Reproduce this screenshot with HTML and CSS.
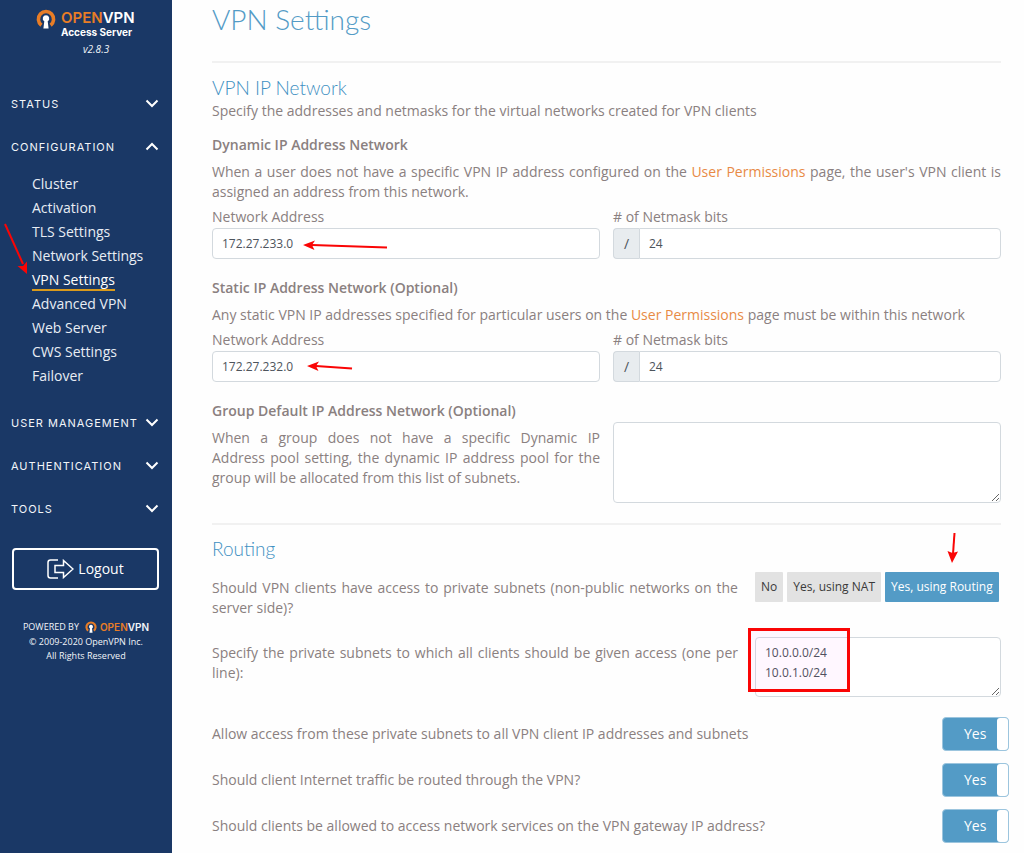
FILE: index.html
```html
<!DOCTYPE html>
<html lang="en">
<head>
    <meta charset="UTF-8">
    <meta name="viewport" content="width=device-width, initial-scale=1.0">
    <title>VPN Settings - OpenVPN Access Server</title>
    <link rel="stylesheet" href="styles.css">
</head>
<body>
    <svg class="defs" aria-hidden="true">
        <symbol id="ovpn" viewBox="0 0 20 20">
            <path d="M5.4 16.2A7.6 7.6 0 1 1 14.6 16.2" fill="none" stroke="#e87d26" stroke-width="3.6"/>
            <path d="M10 6.2a3.3 3.3 0 0 1 1.7 6.1L12.6 19.5H7.4L8.3 12.3A3.3 3.3 0 0 1 10 6.2z" fill="#fff"/>
        </symbol>
        <symbol id="chevron" viewBox="0 0 14 9">
            <path d="M1.5 1.5L7 7L12.5 1.5" fill="none" stroke="#fff" stroke-width="2"/>
        </symbol>
    </svg>

    <div class="layout">
        <aside class="sidebar">
            <div class="brand">
                <svg class="brand-icon"><use href="#ovpn"/></svg>
                <div>
                    <div class="brand-name"><span>OPEN</span>VPN</div>
                    <div class="brand-sub">Access Server</div>
                </div>
            </div>
            <div class="version">v2.8.3</div>

            <nav class="menu">
                <button class="menu-head">STATUS <svg><use href="#chevron"/></svg></button>
                <button class="menu-head open">CONFIGURATION <svg><use href="#chevron"/></svg></button>
                <ul class="submenu">
                    <li><a href="#">Cluster</a></li>
                    <li><a href="#">Activation</a></li>
                    <li><a href="#">TLS Settings</a></li>
                    <li><a href="#">Network Settings</a></li>
                    <li class="current">
                        <a href="#">VPN Settings</a>
                        <svg class="arrow arrow-menu" viewBox="0 0 26 54"><path d="M3 2L21 42" /><path class="tip" d="M25 52L15.500 44L21 44L25 39.500z"/></svg>
                    </li>
                    <li><a href="#">Advanced VPN</a></li>
                    <li><a href="#">Web Server</a></li>
                    <li><a href="#">CWS Settings</a></li>
                    <li><a href="#">Failover</a></li>
                </ul>
                <button class="menu-head">USER MANAGEMENT <svg><use href="#chevron"/></svg></button>
                <button class="menu-head">AUTHENTICATION <svg><use href="#chevron"/></svg></button>
                <button class="menu-head">TOOLS <svg><use href="#chevron"/></svg></button>
            </nav>

            <button class="logout">
                <svg viewBox="0 0 27 20"><path d="M11 1H3.500Q1 1 1 3.500V16.500Q1 19 3.500 19H11M8 6.500H16.500V1.500L26 10L16.500 18.500V13.500H8z"/></svg>
                Logout
            </button>

            <div class="powered">
                <div class="powered-row">POWERED BY <svg><use href="#ovpn"/></svg> <b><span>OPEN</span>VPN</b></div>
                <div>© 2009-2020 OpenVPN Inc.</div>
                <div>All Rights Reserved</div>
            </div>
        </aside>

        <main class="content">
            <h1>VPN Settings</h1>

            <section>
                <h2>VPN IP Network</h2>
                <p>Specify the addresses and netmasks for the virtual networks created for VPN clients</p>

                <h3>Dynamic IP Address Network</h3>
                <p>When a user does not have a specific VPN IP address configured on the <a href="#">User Permissions</a> page, the user's VPN client is assigned an address from this network.</p>
                <div class="fields">
                    <div class="field">
                        <label for="dynAddr">Network Address</label>
                        <input type="text" id="dynAddr" value="172.27.233.0">
                        <svg class="arrow arrow-dyn" viewBox="0 0 86 12"><path d="M85 7.500L10 5"/><path class="tip" d="M1 5L13 .5L10 5L12.500 10z"/></svg>
                    </div>
                    <div class="field">
                        <label for="dynBits"># of Netmask bits</label>
                        <div class="group"><span>/</span><input type="text" id="dynBits" value="24"></div>
                    </div>
                </div>

                <h3>Static IP Address Network (Optional)</h3>
                <p>Any static VPN IP addresses specified for particular users on the <a href="#">User Permissions</a> page must be within this network</p>
                <div class="fields">
                    <div class="field">
                        <label for="statAddr">Network Address</label>
                        <input type="text" id="statAddr" value="172.27.232.0">
                        <svg class="arrow arrow-stat" viewBox="0 0 48 12"><path d="M46 7.500L10 5"/><path class="tip" d="M1 5L13 .5L10 5L12.500 10z"/></svg>
                    </div>
                    <div class="field">
                        <label for="statBits"># of Netmask bits</label>
                        <div class="group"><span>/</span><input type="text" id="statBits" value="24"></div>
                    </div>
                </div>

                <h3>Group Default IP Address Network (Optional)</h3>
                <div class="fields group-default">
                    <label for="groupNets">When a group does not have a specific Dynamic IP Address&nbsp;pool setting, the dynamic IP address pool for the group will be allocated from this list of subnets.</label>
                    <textarea id="groupNets"></textarea>
                </div>
            </section>

            <section>
                <h2>Routing</h2>
                <div class="row">
                    <p>Should VPN clients have access to private subnets (non-public networks on the server side)?</p>
                    <div class="choices">
                        <button>No</button>
                        <button>Yes, using NAT</button>
                        <button class="active">Yes, using Routing</button>
                        <svg class="arrow arrow-routing" viewBox="0 0 12 32"><path d="M7.500 1L6 22"/><path class="tip" d="M5 31L.5 19L5.500 21L11 19.500z"/></svg>
                    </div>
                </div>
                <div class="row">
                    <label for="subnets">Specify the private subnets to which all clients should be given access (one per line):</label>
                    <div class="subnets">
                        <textarea id="subnets">10.0.0.0/24
10.0.1.0/24</textarea>
                        <div class="highlight"></div>
                    </div>
                </div>
                <div class="toggles">
                    <label class="toggle-row">
                        Allow access from these private subnets to all VPN client IP addresses and subnets
                        <span class="toggle"><input type="checkbox" checked><span>Yes</span></span>
                    </label>
                    <label class="toggle-row">
                        Should client Internet traffic be routed through the VPN?
                        <span class="toggle"><input type="checkbox" checked><span>Yes</span></span>
                    </label>
                    <label class="toggle-row">
                        Should clients be allowed to access network services on the VPN gateway IP address?
                        <span class="toggle"><input type="checkbox" checked><span>Yes</span></span>
                    </label>
                </div>
            </section>
        </main>
    </div>
</body>
</html>
```
FILE: styles.css
```css
* {
    box-sizing: border-box;
}
body {
    margin: 0;
    font-family: "Open Sans", sans-serif;
    font-size: 14px;
    line-height: 20px;
    color: #8a8080;
    background-color: #fefefe;
}
h1, h2, h3, p, ul {
    margin: 0;
    padding: 0;
}
button, input, textarea {
    font: inherit;
    margin: 0;
}
button {
    cursor: pointer;
}
.defs {
    position: absolute;
    width: 0;
    height: 0;
}
.layout {
    display: flex;
    min-height: 100vh;
}

/* Sidebar */
.sidebar {
    flex: 0 0 172px;
    min-width: 0;
    background-color: #1a3866;
    color: #f2f5f9;
}
.brand {
    display: flex;
    gap: 5px;
    padding: 9px 0 0 36px;
    color: white;
    font-family: Inter, sans-serif;
}
.brand-icon {
    width: 20px;
    height: 20px;
}
.brand-name {
    font-size: 15px;
    line-height: 17px;
    font-weight: 600;
}
.brand-name span, .powered b span {
    color: #e87d26;
}
.brand-sub {
    font-size: 10px;
    line-height: 12px;
    font-weight: 700;
}
.version {
    margin: 3px 0 25px 83px;
    font-size: 10px;
    line-height: 16px;
    font-style: italic;
}
.menu-head {
    display: flex;
    justify-content: space-between;
    align-items: center;
    width: 100%;
    height: 43px;
    padding: 0 13px 0 11px;
    border: none;
    background: none;
    color: #f2f5f9;
    font-family: Inter, sans-serif;
    font-size: 11px;
    font-weight: 400;
    letter-spacing: 1px;
    white-space: nowrap;
}
.menu-head svg {
    width: 14px;
    height: 9px;
}
.menu-head.open svg {
    transform: rotate(180deg);
}
.submenu {
    list-style: none;
    padding: 4px 0 13px 32px;
    line-height: 24px;
}
.submenu a {
    color: #e8edf4;
    text-decoration: none;
}
.submenu .current {
    position: relative;
}
.submenu .current a {
    color: white;
    border-bottom: 2px solid #d99a1c;
}
.logout {
    display: flex;
    justify-content: center;
    align-items: center;
    gap: 4px;
    width: 147px;
    height: 42px;
    margin: 18px 12px 29px;
    border: 2px solid white;
    border-radius: 4px;
    background: none;
    color: white;
}
.logout svg {
    width: 27px;
    height: 20px;
    fill: none;
    stroke: white;
    stroke-width: 1.5;
}
.powered {
    font-size: 9px;
    line-height: 14px;
    text-align: center;
}
.powered-row {
    display: flex;
    justify-content: center;
    align-items: center;
    gap: 3px;
    line-height: 16px;
}
.powered-row svg {
    width: 12px;
    height: 12px;
    margin-left: 3px;
}
.powered b {
    font-family: Inter, sans-serif;
    font-size: 10px;
    font-weight: 600;
}

/* Content */
.content {
    flex: 1;
    min-width: 0;
    padding: 0 23px 10px 40px;
}
.content h1 {
    height: 38px;
    margin-bottom: 23px;
    font-family: Lato, sans-serif;
    font-size: 28px;
    line-height: 38px;
    font-weight: 300;
    color: #539bc6;
}
.content h2 {
    font-family: Lato, sans-serif;
    font-size: 19px;
    line-height: 26px;
    font-weight: 300;
    color: #3f90c2;
}
.content h3 {
    margin: 19px 0 7px;
    font-size: 14px;
    line-height: 20px;
    font-weight: 600;
    color: #8a8080;
}
.content h2 + p + h3 {
    margin-top: 14px;
}
.content p, .group-default label, .row label {
    text-align: justify;
}
.content a {
    color: #e88a45;
    text-decoration: none;
}
section {
    border-top: 2px solid #f1f1f1;
    padding-top: 12px;
}
section + section {
    margin-top: 20px;
    padding-top: 11px;
}
.fields {
    display: grid;
    grid-template-columns: 1fr 1fr;
    gap: 13px;
    margin-top: 5px;
}
.field {
    position: relative;
}
.field label {
    display: block;
    margin-bottom: 1px;
}
input[type="text"], textarea {
    display: block;
    width: 100%;
    border: 1px solid #d3d9de;
    border-radius: 4px;
    background-color: white;
    color: #4d545c;
    font-size: 12px;
}
input[type="text"] {
    height: 31px;
    padding: 0 9px;
}
textarea {
    height: 60px;
    padding: 5px 9px;
    line-height: 20px;
    resize: both;
}
.group {
    display: flex;
}
.group span {
    flex: 0 0 26px;
    line-height: 29px;
    text-align: center;
    border: 1px solid #d3d9de;
    border-right: none;
    border-radius: 4px 0 0 4px;
    background-color: #e8ecef;
    color: #4d545c;
}
.group input[type="text"] {
    border-radius: 0 4px 4px 0;
}
.group-default {
    margin-top: -6px;
}
.group-default label {
    padding-top: 6px;
}
.group-default textarea {
    height: 81px;
}
.row {
    display: grid;
    grid-template-columns: 1fr 246px;
    gap: 17px;
    margin-top: 19px;
}
.row p, .row label {
    padding-top: 6px;
}
h2 + .row {
    margin-top: 10px;
}
.choices {
    position: relative;
    display: flex;
    gap: 4px;
    align-items: flex-start;
}
.choices button {
    height: 30px;
    padding: 0 6px;
    border: none;
    border-radius: 1px;
    background-color: #e2e2e2;
    color: #3a3a3a;
    font-size: 12px;
    white-space: nowrap;
}
.choices .active {
    background-color: #539bc6;
    color: white;
}
.subnets {
    position: relative;
}
.toggles {
    display: grid;
    gap: 12px;
    margin: 20px -8px 0 0;
}
.toggle-row {
    display: flex;
    justify-content: space-between;
    align-items: center;
}
.toggle {
    position: relative;
    flex: 0 0 67px;
    height: 34px;
    border: 1px solid #9cc5de;
    border-radius: 4px;
    background-color: #539bc6;
    color: white;
    line-height: 32px;
    padding-left: 21px;
}
.toggle input {
    position: absolute;
    top: 0;
    right: 0;
    width: 11px;
    height: 32px;
    margin: 0;
    appearance: none;
    border-radius: 3px;
    background-color: white;
}

/* Annotations */
.arrow {
    position: absolute;
    fill: none;
    stroke: #fa0505;
    stroke-width: 2;
    pointer-events: none;
}
.arrow .tip {
    fill: #fa0505;
    stroke: none;
}
.arrow-menu {
    left: -30px;
    top: -46px;
    width: 26px;
    height: 54px;
}
.arrow-dyn {
    left: 90px;
    top: 33px;
    width: 86px;
    height: 12px;
}
.arrow-stat {
    left: 94px;
    top: 31px;
    width: 48px;
    height: 12px;
}
.arrow-routing {
    right: 42px;
    top: -40px;
    width: 12px;
    height: 32px;
}
.highlight {
    position: absolute;
    left: -7px;
    top: -9px;
    width: 102px;
    height: 64px;
    border: 3px solid #fa0505;
    background-color: rgba(255, 0, 255, 0.03);
    pointer-events: none;
}
```
